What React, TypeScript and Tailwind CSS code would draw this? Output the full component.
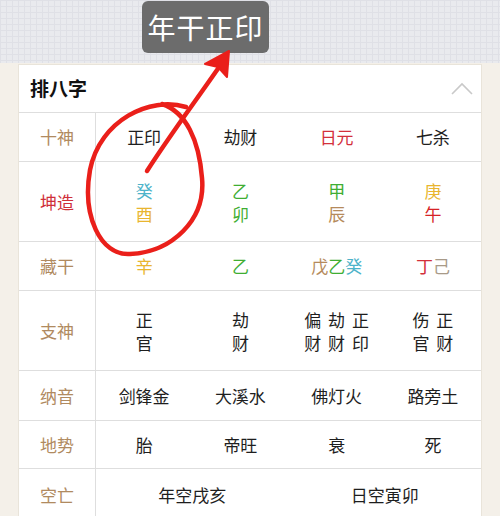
import React from "react";

const font = "font-['Noto_Sans_CJK_SC','Noto_Sans',sans-serif]";

const C = {
  black: "text-[#1e1e1e]",
  red: "text-[#d3303b]",
  cyan: "text-[#4db3c9]",
  yellow: "text-[#e9b52f]",
  green: "text-[#3fae33]",
  tan: "text-[#b58a5c]",
  red2: "text-[#d62226]",
  grey: "text-[#a89a88]",
};

function Row({
  label,
  labelColor = "text-[#b08a60]",
  h,
  children,
  last = false,
}: {
  label: string;
  labelColor?: string;
  h: string;
  children: React.ReactNode;
  last?: boolean;
}) {
  return (
    <div className={`flex ${h} ${last ? "" : "border-b border-[#dedede]"}`}>
      <div
        className={`w-[77px] shrink-0 border-r border-[#dedede] flex items-center justify-center text-[17px] ${labelColor}`}
      >
        {label}
      </div>
      <div className="flex-1 flex">{children}</div>
    </div>
  );
}

function Cell({ children, span = false }: { children: React.ReactNode; span?: boolean }) {
  return (
    <div
      className={`${span ? "flex-[2]" : "flex-1"} flex flex-col items-center justify-center text-[17px] ${C.black}`}
    >
      {children}
    </div>
  );
}

export default function App() {
  return (
    <div className={`relative w-[500px] h-[516px] overflow-hidden bg-[#f4f0e9] ${font}`}>
      <div className="h-[63px] bg-[#e9eaee] bg-[linear-gradient(#dfe0e6_1px,transparent_1px),linear-gradient(90deg,#dfe0e6_1px,transparent_1px)] bg-[size:6px_6px] pt-[1px]">
        <div className="ml-[142px] w-[127px] h-[52px] rounded-[6px] bg-[#6c6c6c] flex items-center justify-center text-white text-[28px] tracking-[1px]">
          年干正印
        </div>
      </div>
      <div className="mx-[18px] mt-[1px] bg-white border border-[#e9e4da] border-b-0 h-[460px]">
        <div className="h-[48px] border-b border-[#dedede] flex items-center justify-between pl-[11px] pr-[8px]">
          <span className="text-[19px] font-bold text-[#111]">排八字</span>
          <svg width="22" height="14" viewBox="0 0 22 14">
            <polyline points="1,12 11,2 21,12" fill="none" stroke="#c9c9c9" strokeWidth="1.6" />
          </svg>
        </div>
        <Row label="十神" h="h-[49px]">
          <Cell>正印</Cell>
          <Cell>劫财</Cell>
          <Cell>
            <span className={C.red}>日元</span>
          </Cell>
          <Cell>七杀</Cell>
        </Row>
        <Row label="坤造" labelColor="text-[#cf2f3a]" h="h-[80px]">
          <Cell>
            <span className={`${C.cyan} leading-[23px]`}>癸</span>
            <span className={`${C.yellow} leading-[23px]`}>酉</span>
          </Cell>
          <Cell>
            <span className={`${C.green} leading-[23px]`}>乙</span>
            <span className={`${C.green} leading-[23px]`}>卯</span>
          </Cell>
          <Cell>
            <span className={`${C.green} leading-[23px]`}>甲</span>
            <span className={`${C.tan} leading-[23px]`}>辰</span>
          </Cell>
          <Cell>
            <span className={`${C.yellow} leading-[23px]`}>庚</span>
            <span className={`${C.red2} leading-[23px]`}>午</span>
          </Cell>
        </Row>
        <Row label="藏干" h="h-[49px]">
          <Cell>
            <span className={C.yellow}>辛</span>
          </Cell>
          <Cell>
            <span className={C.green}>乙</span>
          </Cell>
          <Cell>
            <span>
              <span className={C.tan}>戊</span>
              <span className={C.green}>乙</span>
              <span className={C.cyan}>癸</span>
            </span>
          </Cell>
          <Cell>
            <span>
              <span className={C.red}>丁</span>
              <span className={C.grey}>己</span>
            </span>
          </Cell>
        </Row>
        <Row label="支神" h="h-[80px]">
          <Cell>
            <span className="leading-[23px]">正</span>
            <span className="leading-[23px]">官</span>
          </Cell>
          <Cell>
            <span className="leading-[23px]">劫</span>
            <span className="leading-[23px]">财</span>
          </Cell>
          <Cell>
            <span className="leading-[23px] tracking-[7px] pl-[7px]">偏劫正</span>
            <span className="leading-[23px] tracking-[7px] pl-[7px]">财财印</span>
          </Cell>
          <Cell>
            <span className="leading-[23px] tracking-[7px] pl-[7px]">伤正</span>
            <span className="leading-[23px] tracking-[7px] pl-[7px]">官财</span>
          </Cell>
        </Row>
        <Row label="纳音" h="h-[50px]">
          <Cell>剑锋金</Cell>
          <Cell>大溪水</Cell>
          <Cell>佛灯火</Cell>
          <Cell>路旁土</Cell>
        </Row>
        <Row label="地势" h="h-[48px]">
          <Cell>胎</Cell>
          <Cell>帝旺</Cell>
          <Cell>衰</Cell>
          <Cell>死</Cell>
        </Row>
        <Row label="空亡" h="h-[52px]" last>
          <Cell span>年空戌亥</Cell>
          <Cell span>日空寅卯</Cell>
        </Row>
      </div>
      <svg
        className="absolute inset-0 pointer-events-none"
        width="500"
        height="516"
        viewBox="0 0 500 516"
      >
        <path
          d="M186,107 C150,96 100,120 90,170 C82,215 100,256 130,254 C172,252 206,220 202,178 C199,140 186,112 162,104"
          fill="none"
          stroke="#ea1f1a"
          strokeWidth="4.5"
          strokeLinecap="round"
        />
        <path
          d="M147,171 C170,135 195,102 224,60"
          fill="none"
          stroke="#ea1f1a"
          strokeWidth="4.5"
          strokeLinecap="round"
        />
        <polygon
          points="229,51 205,64 218,67 227,77"
          fill="#ea1f1a"
          stroke="#ea1f1a"
          strokeWidth="2"
          strokeLinejoin="round"
        />
      </svg>
    </div>
  );
}
